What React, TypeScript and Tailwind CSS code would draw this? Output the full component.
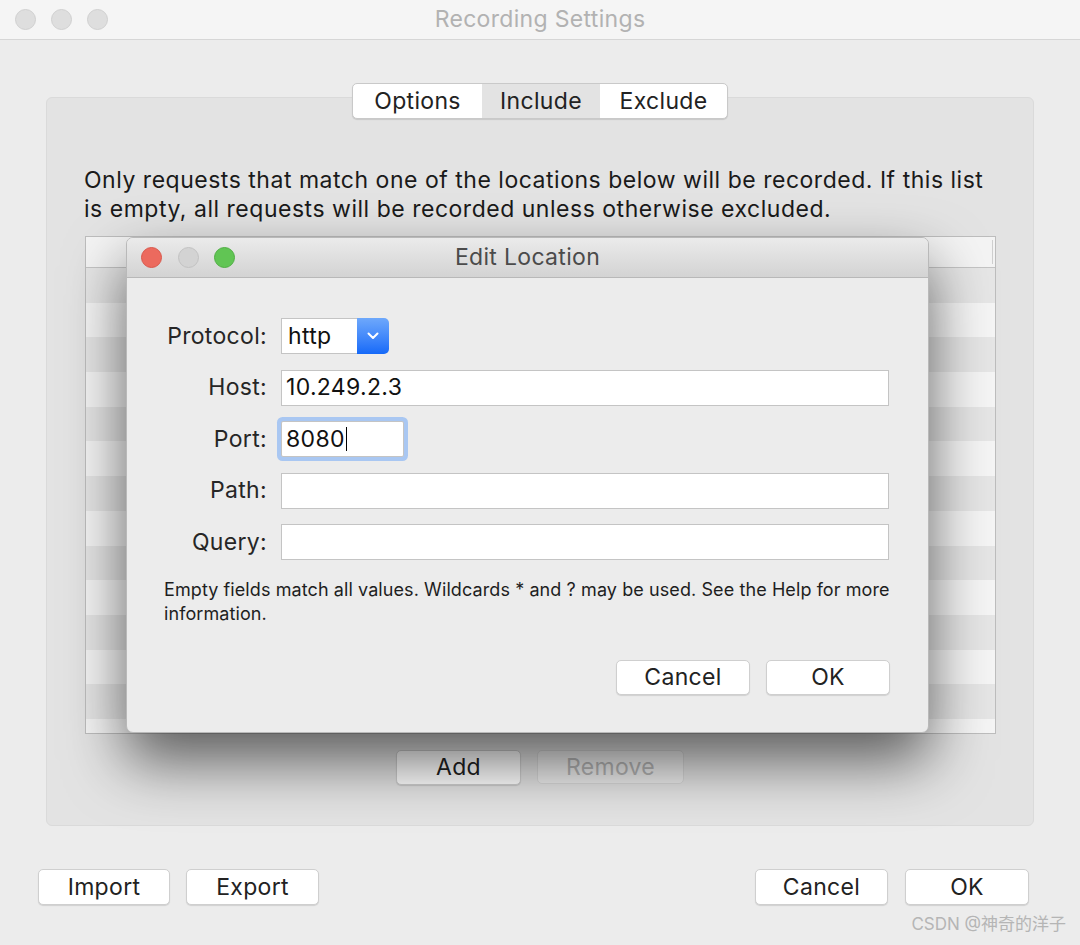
import React from "react";

const FONT = "font-['Inter','Noto_Sans_CJK_SC',sans-serif] tracking-[0.02em]";

function Light({ color }: { color: string }) {
  return <span className={`block w-[21px] h-[21px] rounded-full border ${color}`} />;
}

function MacButton({ children, className = "" }: { children: React.ReactNode; className?: string }) {
  return (
    <button
      className={`h-[35px] rounded-[5px] bg-white border border-[#cfcfcf] shadow-[0_1px_1px_rgba(0,0,0,0.12)] text-[23px] text-[#222] leading-none ${className}`}
    >
      {children}
    </button>
  );
}

function Field({ label, value, focus, width }: { label: string; value?: string; focus?: boolean; width?: string }) {
  return (
    <>
      <div className="h-[36px] flex items-center justify-end text-[23px] text-[#262626]">{label}</div>
      <div className="h-[36px] flex items-center">
        <div
          className={`h-[36px] flex items-center bg-white border border-[#c4c4c4] pl-[4px] text-[23px] text-[#111] ${width ?? "w-full"} ${
            focus ? "rounded-[2px] ring-[4px] ring-[#a9c7f2]" : ""
          }`}
        >
          {value}
          {focus && <span className="ml-[1px] w-[1.5px] h-[24px] bg-black" />}
        </div>
      </div>
    </>
  );
}

function EditLocation() {
  return (
    <div className="absolute left-[126px] top-[237px] w-[803px] h-[496px] rounded-[7px] bg-[#ececec] border border-[#b9b9b9] shadow-[0_28px_60px_rgba(0,0,0,0.6)] overflow-hidden flex flex-col">
      <div className="h-[40px] shrink-0 flex items-center bg-gradient-to-b from-[#ebebeb] to-[#d3d3d3] border-b border-[#b8b8b8]">
        <div className="w-[120px] flex items-center gap-[15.5px] pl-[14px]">
          <Light color="bg-[#ec6a5e] border-[#d9574b]" />
          <Light color="bg-[#d3d3d3] border-[#c2c2c2]" />
          <Light color="bg-[#61c554] border-[#4fae43]" />
        </div>
        <div className="flex-1 text-center text-[23px] text-[#4b4b4b]">Edit Location</div>
        <div className="w-[120px]" />
      </div>

      <div className="flex-1 flex flex-col pt-[40px]">
        <div className="grid grid-cols-[140px_1fr] gap-x-[14px] gap-y-[15.5px] pr-[39px]">
          <div className="h-[36px] flex items-center justify-end text-[23px] text-[#262626]">Protocol:</div>
          <div className="h-[36px] flex items-center">
            <div className="h-[36px] w-[76px] flex items-center bg-white border border-[#c4c4c4] border-r-0 pl-[6px] text-[23px] text-[#111]">
              http
            </div>
            <div className="h-[36px] w-[32px] flex items-center justify-center rounded-r-[5px] bg-gradient-to-b from-[#6ea8fb] to-[#1469f8]">
              <svg width="12" height="8" viewBox="0 0 12 8" fill="none">
                <path d="M1.5 1.5 L6 6 L10.5 1.5" stroke="white" strokeWidth="2" strokeLinecap="round" strokeLinejoin="round" />
              </svg>
            </div>
          </div>
          <Field label="Host:" value="10.249.2.3" />
          <Field label="Port:" value="8080" focus width="w-[123px]" />
          <Field label="Path:" />
          <Field label="Query:" />
        </div>

        <div className="mt-[18px] pl-[37px] text-[18px] leading-[24px] tracking-[0.005em] text-[#1e1e1e]">
          <div className="whitespace-nowrap">Empty fields match all values. Wildcards * and ? may be used. See the Help for more</div>
          <div>information.</div>
        </div>

        <div className="mt-[34px] flex justify-end gap-[16px] pr-[38px]">
          <MacButton className="w-[134px]">Cancel</MacButton>
          <MacButton className="w-[124px]">OK</MacButton>
        </div>
      </div>
    </div>
  );
}

export default function App() {
  const rows = Array.from({ length: 14 });
  return (
    <div className={`relative w-[1080px] h-[945px] overflow-hidden bg-[#ececec] ${FONT}`}>
      {/* title bar */}
      <div className="h-[40px] flex items-center bg-[#f5f5f5] border-b border-[#d6d6d6]">
        <div className="w-[130px] flex items-center gap-[15px] pl-[15px]">
          <Light color="bg-[#dedede] border-[#d0d0d0]" />
          <Light color="bg-[#dedede] border-[#d0d0d0]" />
          <Light color="bg-[#dedede] border-[#d0d0d0]" />
        </div>
        <div className="flex-1 text-center text-[23px] text-[#b2b2b2]">Recording Settings</div>
        <div className="w-[130px]" />
      </div>

      {/* segmented control */}
      <div className="relative z-10 mt-[43px] flex justify-center">
        <div className="flex h-[36px] rounded-[5px] border border-[#c9c9c9] bg-white shadow-[0_1px_1px_rgba(0,0,0,0.12)] overflow-hidden text-[23px] text-[#222]">
          <div className="w-[129px] flex items-center justify-center">Options</div>
          <div className="w-[118px] flex items-center justify-center bg-[#e3e3e3]">Include</div>
          <div className="w-[127px] flex items-center justify-center">Exclude</div>
        </div>
      </div>

      {/* group box */}
      <div className="ml-[46px] -mt-[22px] w-[988px] h-[729px] rounded-[6px] bg-[#e3e3e3] border border-[#dadada] flex flex-col pt-[68px]">
        <p className="px-[37px] text-[23px] leading-[29px] tracking-[0.0225em] text-[#1a1a1a] whitespace-nowrap">
          Only requests that match one of the locations below will be recorded. If this list
          <br />
          is empty, all requests will be recorded unless otherwise excluded.
        </p>

        <div className="mt-[12px] ml-[38px] w-[911px] h-[498px] border border-[#bdbdbd] bg-[#f4f4f4] overflow-hidden">
          <div className="relative h-[31px] bg-[#f4f4f4] border-b border-[#c4c4c4]">
            <span className="absolute right-[2px] top-[3px] bottom-[3px] w-px bg-[#cfcfcf]" />
          </div>
          {rows.map((_, i) => (
            <div key={i} className={`h-[34.7px] ${i % 2 === 0 ? "bg-[#e6e6e6]" : "bg-[#f5f5f5]"}`} />
          ))}
        </div>

        <div className="mt-[16px] flex justify-center gap-[16px]">
          <MacButton className="w-[125px] h-[34px]">Add</MacButton>
          <button className="w-[147px] h-[34px] rounded-[5px] border border-[#d8d8d8] bg-[#ececec] text-[23px] text-[#b4b4b4] leading-none">
            Remove
          </button>
        </div>
      </div>

      {/* bottom buttons */}
      <div className="mt-[43px] flex items-center pl-[38px] pr-[51px]">
        <MacButton className="w-[132px] h-[36px]">Import</MacButton>
        <MacButton className="w-[133px] h-[36px] ml-[16px]">Export</MacButton>
        <div className="flex-1" />
        <MacButton className="w-[133px] h-[36px]">Cancel</MacButton>
        <MacButton className="w-[124px] h-[36px] ml-[17px]">OK</MacButton>
      </div>

      <div className="absolute right-[14px] bottom-[8px] text-[17px] tracking-normal text-[#b5b5b5]">CSDN @神奇的洋子</div>

      <EditLocation />
    </div>
  );
}
